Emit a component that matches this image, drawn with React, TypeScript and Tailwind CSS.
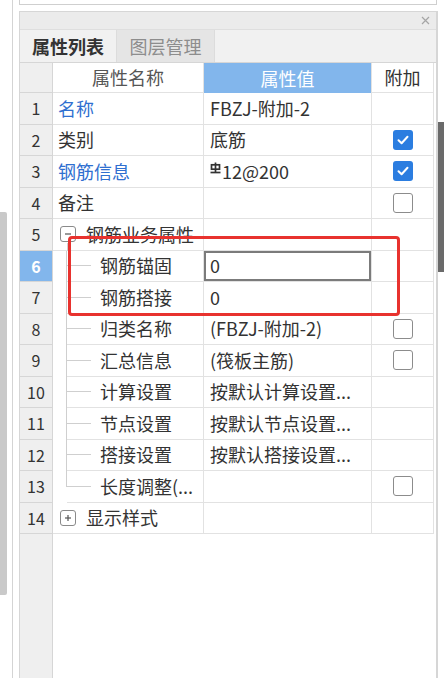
import React from "react";

const FONT = { fontFamily: '"Noto Sans CJK SC", "Noto Sans", sans-serif' };

type Row = {
  n: number;
  name: string;
  value?: string;
  blue?: boolean;
  check?: "on" | "off";
  kind: "top" | "group" | "child" | "last" | "plus";
  rebar?: boolean;
  input?: boolean;
};

const rows: Row[] = [
  { n: 1, name: "名称", value: "FBZJ-附加-2", blue: true, kind: "top" },
  { n: 2, name: "类别", value: "底筋", check: "on", kind: "top" },
  { n: 3, name: "钢筋信息", value: "12@200", blue: true, check: "on", kind: "top", rebar: true },
  { n: 4, name: "备注", value: "", check: "off", kind: "top" },
  { n: 5, name: "钢筋业务属性", kind: "group" },
  { n: 6, name: "钢筋锚固", value: "0", kind: "child", input: true },
  { n: 7, name: "钢筋搭接", value: "0", kind: "child" },
  { n: 8, name: "归类名称", value: "(FBZJ-附加-2)", check: "off", kind: "child" },
  { n: 9, name: "汇总信息", value: "(筏板主筋)", check: "off", kind: "child" },
  { n: 10, name: "计算设置", value: "按默认计算设置...", kind: "child" },
  { n: 11, name: "节点设置", value: "按默认节点设置...", kind: "child" },
  { n: 12, name: "搭接设置", value: "按默认搭接设置...", kind: "child" },
  { n: 13, name: "长度调整(...", value: "", check: "off", kind: "last" },
  { n: 14, name: "显示样式", kind: "plus" },
];

function Check({ on }: { on: boolean }) {
  if (on)
    return (
      <div className="w-[20px] h-[20px] rounded-[3px] bg-[#2b7de0] flex items-center justify-center">
        <svg width="14" height="14" viewBox="0 0 14 14">
          <path d="M2.5 7.2 L5.6 10.2 L11.5 3.8" fill="none" stroke="#fff" strokeWidth="2" strokeLinecap="round" strokeLinejoin="round" />
        </svg>
      </div>
    );
  return <div className="w-[20px] h-[20px] rounded-[3px] border-[1.5px] border-[#8c8c8c] bg-white" />;
}

function BoxSign({ plus }: { plus?: boolean }) {
  return (
    <div className="w-[16px] h-[16px] rounded-[3px] border border-[#8a8a8a] bg-white flex items-center justify-center shrink-0">
      <svg width="10" height="10" viewBox="0 0 10 10">
        <path d="M2 5 H8" stroke="#555" strokeWidth="1.2" />
        {plus && <path d="M5 2 V8" stroke="#555" strokeWidth="1.2" />}
      </svg>
    </div>
  );
}

function RebarSymbol() {
  return (
    <svg width="11" height="12" viewBox="0 0 11 12" className="self-start mt-[6px] mr-[1px]">
      <path d="M5.5 0.5 V10.5" stroke="#333" strokeWidth="1.7" />
      <rect x="1.5" y="2.8" width="8" height="4.4" fill="none" stroke="#333" strokeWidth="1.7" />
      <path d="M0.5 10.5 H10.5" stroke="#333" strokeWidth="1.7" />
    </svg>
  );
}

function NameCell({ r }: { r: Row }) {
  const color = r.blue ? "text-[#2f6fd0]" : "text-[#333]";
  if (r.kind === "top")
    return (
      <div className={`w-[151px] h-full border-r border-b border-[#e2e2e2] flex items-center pl-[5px] ${color}`}>
        {r.name}
      </div>
    );
  if (r.kind === "group" || r.kind === "plus")
    return (
      <div className="w-[151px] h-full border-r border-b border-[#e2e2e2] flex">
        <div className="w-[14px] shrink-0 relative ml-[7px] flex items-center">
          <BoxSign plus={r.kind === "plus"} />
          {r.kind === "group" && (
            <div className="absolute left-[7px] top-[24px] bottom-[-1px] w-px bg-[#cfcfcf]" />
          )}
        </div>
        <div className="flex items-center pl-[12px] text-[#333]">{r.name}</div>
      </div>
    );
  return (
    <div className="w-[151px] h-full border-r border-[#e2e2e2] flex">
      <div className="w-[14px] shrink-0 flex flex-col">
        <div className={`${r.kind === "last" ? "h-1/2" : "h-full"} border-r border-[#cfcfcf]`} />
      </div>
      <div className="flex-1 h-full border-b border-[#e2e2e2] flex items-center">
        <div className="w-[24px] h-px bg-[#cfcfcf]" />
        <div className="pl-[9px] text-[#333] whitespace-nowrap">{r.name}</div>
      </div>
    </div>
  );
}

export default function App() {
  return (
    <div className="w-[444px] h-[678px] bg-white flex overflow-hidden relative text-[18px]" style={FONT}>
      <div className="w-[12px] flex flex-col shrink-0">
        <div className="h-[212px]" />
        <div className="h-[383px] w-[7px] bg-[#c9c9c9] rounded-r-[2px]" />
      </div>
      <div className="w-px bg-[#d4d4d4] shrink-0" />
      <div className="w-[6px] shrink-0" />

      <div className="w-[419px] shrink-0 flex flex-col">
        <div className="h-[5px] mr-[1px] border-l border-r border-b border-[#cfcfcf]" />
        <div className="h-[6px]" />
        <div className="flex-1 flex flex-col border-l border-r-2 border-t border-[#d6d6d6]">
          <div className="h-[17px] bg-[#ebebeb] flex items-center justify-end pr-[6px]">
            <svg width="9" height="9" viewBox="0 0 9 9">
              <path d="M1 1 L8 8 M8 1 L1 8" stroke="#a5a5a5" strokeWidth="1.2" />
            </svg>
          </div>
          <div className="h-[33px] bg-[#f1f1f1] flex border-t border-[#dedede]">
            <div className="w-[97px] flex items-center justify-center font-bold text-[#333] text-[18px] border-r border-[#dcdcdc]">
              属性列表
            </div>
            <div className="w-[98px] flex items-center justify-center bg-[#e5e5e5] text-[#8d8d8d] text-[18px] border-r border-[#dcdcdc]">
              图层管理
            </div>
            <div className="flex-1" />
          </div>
          <div className="h-[31px] flex border-t border-[#d6d6d6] shrink-0">
            <div className="w-[33px] h-full bg-[#efefef] border-r border-b border-[#d6d6d6]" />
            <div className="w-[151px] h-full border-r border-b border-[#e2e2e2] flex items-center justify-center text-[#555]">
              属性名称
            </div>
            <div className="w-[168px] h-full bg-[#82b6ec] flex items-center justify-center text-white border-r border-[#e2e2e2]">
              属性值
            </div>
            <div className="w-[62px] h-full border-r border-b border-[#e2e2e2] flex items-center justify-center text-[#333]">
              附加
            </div>
          </div>
          {rows.map((r) => (
            <div key={r.n} className="h-[31.5px] flex shrink-0">
              <div
                className={`w-[33px] h-full border-r border-b border-[#d6d6d6] flex items-center justify-center text-[16px] ${
                  r.n === 6 ? "bg-[#82b6ec] text-white font-bold" : "bg-[#efefef] text-[#333]"
                }`}
              >
                {r.n}
              </div>
              <NameCell r={r} />
              <div className="w-[168px] h-full border-r border-b border-[#e2e2e2] flex items-center text-[#333] whitespace-nowrap">
                {r.input ? (
                  <div className="w-full h-[30px] border-2 border-[#7b7b7b] flex items-center pl-[4px]">
                    {r.value}
                  </div>
                ) : (
                  <div className="flex items-center h-full pl-[6px]">
                    {r.rebar && <RebarSymbol />}
                    <span>{r.value}</span>
                  </div>
                )}
              </div>
              <div className="w-[62px] h-full border-r border-b border-[#e2e2e2] flex items-center justify-center">
                {r.check && <Check on={r.check === "on"} />}
              </div>
            </div>
          ))}
          <div className="flex-1 flex">
            <div className="w-[33px] bg-[#efefef] border-r border-[#d6d6d6]" />
          </div>
        </div>
      </div>

      <div className="w-[6px] shrink-0 flex flex-col">
        <div className="h-[122px]" />
        <div className="h-[150px] bg-[#6a6a6a]" />
      </div>

      <div className="absolute left-[68px] top-[236px] w-[332px] h-[80px] border-[3px] border-[#e8322e] rounded-[4px] pointer-events-none" />
    </div>
  );
}
